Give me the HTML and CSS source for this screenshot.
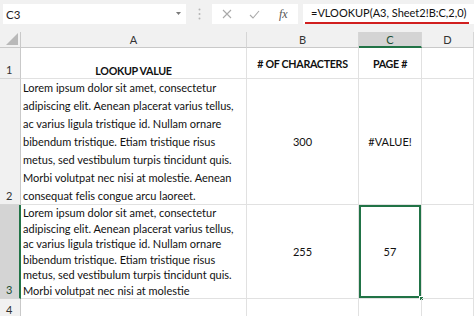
FILE: index.html
```html
<!DOCTYPE html>
<html lang="en">
<head>
    <meta charset="UTF-8">
    <meta name="viewport" content="width=device-width, initial-scale=1.0">
    <title>VLOOKUP #VALUE! example</title>
    <link rel="stylesheet" href="styles.css">
</head>
<body>
    <div class="formula-bar">
        <div class="name-box">
            <span>C3</span>
            <svg class="drop" width="5" height="3" viewBox="0 0 5 3"><path d="M0 0h5L2.5 3z" fill="#7a7a7a"/></svg>
        </div>
        <div class="grip">
            <svg width="3" height="12" viewBox="0 0 3 12"><circle cx="1.5" cy="1.5" r="1" fill="#b5b5b5"/><circle cx="1.5" cy="6" r="1" fill="#b5b5b5"/><circle cx="1.5" cy="10.5" r="1" fill="#b5b5b5"/></svg>
        </div>
        <div class="fx-buttons">
            <svg width="10" height="10" viewBox="0 0 10 10"><path d="M1 1l8 8M9 1l-8 8" stroke="#a9a9a9" stroke-width="1.1" fill="none"/></svg>
            <svg width="11" height="9" viewBox="0 0 11 9"><path d="M1 5l3 3 6-7" stroke="#a9a9a9" stroke-width="1.1" fill="none"/></svg>
            <span class="fx">fx</span>
        </div>
        <div class="formula-box">
            <span class="formula-text">=VLOOKUP(A3, Sheet2!B:C,2,0)</span>
        </div>
    </div>

    <div class="sheet">
        <div class="corner">
            <svg width="12" height="12" viewBox="0 0 12 12"><path d="M12 0v12H0z" fill="#b9b9b9"/></svg>
        </div>
        <div class="col-head">A</div>
        <div class="col-head">B</div>
        <div class="col-head selected">C</div>
        <div class="col-head">D</div>

        <div class="row-head">1</div>
        <div class="cell bold bottom">LOOKUP VALUE</div>
        <div class="cell bold middle">#&nbsp;OF CHARACTERS</div>
        <div class="cell bold middle">PAGE #</div>
        <div class="cell"></div>

        <div class="row-head">2</div>
        <div class="cell wrap">
            Lorem ipsum dolor sit amet, consectetur<br>
            adipiscing elit. Aenean placerat varius tellus,<br>
            ac varius ligula tristique id. Nullam ornare<br>
            bibendum tristique. Etiam tristique risus<br>
            metus, sed vestibulum turpis tincidunt quis.<br>
            Morbi volutpat nec nisi at molestie. Aenean<br>
            consequat felis congue arcu laoreet.
        </div>
        <div class="cell middle">300</div>
        <div class="cell middle">#VALUE!</div>
        <div class="cell"></div>

        <div class="row-head selected">3</div>
        <div class="cell wrap tight">
            Lorem ipsum dolor sit amet, consectetur<br>
            adipiscing elit. Aenean placerat varius tellus,<br>
            ac varius ligula tristique id. Nullam ornare<br>
            bibendum tristique. Etiam tristique risus<br>
            metus, sed vestibulum turpis tincidunt quis.<br>
            Morbi volutpat nec nisi at molestie
        </div>
        <div class="cell middle">255</div>
        <div class="cell middle active">57<span class="fill-handle"></span></div>
        <div class="cell"></div>

        <div class="row-head">4</div>
        <div class="cell"></div>
        <div class="cell"></div>
        <div class="cell"></div>
        <div class="cell"></div>
    </div>
</body>
</html>
```

FILE: styles.css
```css
* {
    box-sizing: border-box;
}
body {
    margin: 0;
    width: 474px;
    height: 316px;
    overflow: hidden;
    background-color: #ffffff;
    font-family: Lato, "Liberation Sans", sans-serif;
    color: #111111;
}
.formula-bar {
    display: flex;
    height: 32px;
    padding: 4px 0 0 3px;
    background-color: #f1f1f1;
}
.name-box {
    display: flex;
    align-items: center;
    justify-content: space-between;
    width: 183px;
    height: 20px;
    padding: 0 5px 0 3px;
    background-color: #ffffff;
    font-size: 11.5px;
    color: #222222;
}
.drop {
    margin-bottom: 1px;
}
.grip {
    display: flex;
    align-items: center;
    justify-content: center;
    width: 26px;
    height: 20px;
}
.fx-buttons {
    display: flex;
    align-items: center;
    gap: 17px;
    width: 86px;
    height: 20px;
    padding-left: 10px;
    background-color: #ffffff;
}
.fx {
    font-family: "Liberation Serif", serif;
    font-style: italic;
    font-size: 12px;
    color: #555555;
    margin-left: 2px;
}
.formula-box {
    display: flex;
    flex: 1;
    height: 20px;
    margin-left: 5px;
    background-color: #ffffff;
    white-space: nowrap;
    overflow: hidden;
}
.formula-text {
    height: 20px;
    line-height: 18px;
    padding: 0 2px 0 6px;
    margin-left: 2px;
    border-bottom: 2px solid #d11f1f;
    font-size: 11px;
    color: #111111;
}
.sheet {
    display: grid;
    grid-template-columns: 21px 226px 112px 63px 52px;
    grid-template-rows: 16px 31px 126px 94px 20px;
}
.corner {
    display: flex;
    align-items: flex-end;
    justify-content: flex-end;
    padding: 0 2px 2px 0;
    background-color: #f1f1f1;
    border-right: 1px solid #c9c9c9;
    border-bottom: 1px solid #c9c9c9;
}
.col-head {
    display: flex;
    align-items: center;
    justify-content: center;
    background-color: #f1f1f1;
    border-right: 1px solid #d6d6d6;
    border-bottom: 1px solid #c9c9c9;
    font-size: 11px;
    color: #333333;
}
.col-head.selected {
    background-color: #d4d4d4;
    border-bottom: 2px solid #217346;
    color: #1d4f33;
}
.row-head {
    display: flex;
    align-items: flex-end;
    padding: 0 0 2px 6px;
    background-color: #f1f1f1;
    border-right: 1px solid #c9c9c9;
    border-bottom: 1px solid #d6d6d6;
    font-size: 11px;
    color: #333333;
}
.row-head.selected {
    background-color: #d4d4d4;
    border-right: 2px solid #217346;
    color: #1d4f33;
}
.cell {
    position: relative;
    border-right: 1px solid #e1e1e1;
    border-bottom: 1px solid #e1e1e1;
    font-size: 11px;
}
.bold {
    font-weight: bold;
    font-size: 10.7px;
    letter-spacing: -0.3px;
}
.bottom {
    display: flex;
    align-items: flex-end;
    justify-content: center;
    padding-bottom: 1px;
}
.middle {
    display: flex;
    align-items: center;
    justify-content: center;
}
.wrap {
    padding: 0 0 0 2px;
    line-height: 18px;
    white-space: nowrap;
    overflow: hidden;
}
.wrap.tight {
    line-height: 15.6px;
}
.active {
    box-shadow: inset 0 0 0 2px #217346;
}
.fill-handle {
    position: absolute;
    right: -3px;
    bottom: -3px;
    width: 5px;
    height: 5px;
    background-color: #217346;
    border: 1px solid #ffffff;
}
```
